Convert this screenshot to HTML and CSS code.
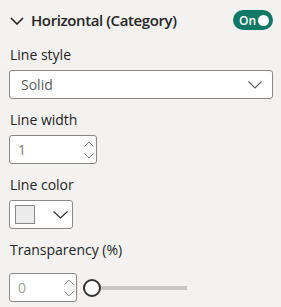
FILE: index.html
```html
<!DOCTYPE html>
<html>
<head>
    <title>Format pane</title>
    <link rel="stylesheet" href="styles.css">
</head>
<body>
    <div class="pane">
        <div class="card-head">
            <div class="head-title">
                <svg class="head-chevron" width="14" height="8" viewBox="0 0 14 8"><path d="M1 1 L7 7 L13 1" fill="none" stroke="#252423" stroke-width="1.6"/></svg>
                <span>Horizontal (Category)</span>
            </div>
            <div class="toggle"><span>On</span><i class="knob"></i></div>
        </div>

        <label class="field-label first">Line style</label>
        <div class="dropdown">
            <span>Solid</span>
            <svg width="14" height="8" viewBox="0 0 14 8"><path d="M0.5 0.5 L7 7 L13.5 0.5" fill="none" stroke="#605e5c" stroke-width="1.1"/></svg>
        </div>

        <label class="field-label">Line width</label>
        <div class="spin wide">
            <span class="value">1</span>
            <div class="arrows">
                <svg width="10" height="6" viewBox="0 0 10 6"><path d="M0.5 5.5 L5 1 L9.5 5.5" fill="none" stroke="#8a8886" stroke-width="1"/></svg>
                <svg width="10" height="6" viewBox="0 0 10 6"><path d="M0.5 0.5 L5 5 L9.5 0.5" fill="none" stroke="#8a8886" stroke-width="1"/></svg>
            </div>
        </div>

        <label class="field-label">Line color</label>
        <div class="color-pick">
            <span class="swatch"></span>
            <svg width="15" height="8" viewBox="0 0 15 8"><path d="M0.5 0.5 L7.5 7 L14.5 0.5" fill="none" stroke="#323130" stroke-width="1.2"/></svg>
        </div>

        <label class="field-label">Transparency (%)</label>
        <div class="slider-row">
            <div class="spin narrow">
                <span class="value light">0</span>
                <div class="arrows">
                    <svg width="10" height="6" viewBox="0 0 10 6"><path d="M0.5 5.5 L5 1 L9.5 5.5" fill="none" stroke="#8a8886" stroke-width="1"/></svg>
                    <svg width="10" height="6" viewBox="0 0 10 6"><path d="M0.5 0.5 L5 5 L9.5 0.5" fill="none" stroke="#8a8886" stroke-width="1"/></svg>
                </div>
            </div>
            <div class="slider">
                <div class="track"></div>
                <div class="thumb"></div>
            </div>
        </div>
    </div>
</body>
</html>
```

FILE: styles.css
```css
body { margin: 0; background: #f3f2f1; font-family: "Segoe UI", "Open Sans", sans-serif; color: #252423; }
.pane { padding: 10px 8px 0 9px; display: flex; flex-direction: column; align-items: flex-start; }

.card-head { display: flex; align-items: center; justify-content: space-between; width: 100%; height: 20px; }
.head-title { display: flex; align-items: center; gap: 7px; padding-left: 1px; font-size: 15px; font-weight: 600; letter-spacing: -0.4px; }
.head-chevron { margin-top: 1px; }
.toggle { width: 40px; height: 20px; border-radius: 10px; background: #117865; color: #fff; display: flex; align-items: center; justify-content: space-between; padding: 0 4px 0 6px; box-sizing: border-box; font-size: 12px; font-weight: 600; }
.knob { width: 11px; height: 11px; border-radius: 50%; background: #fff; display: block; }

.field-label { display: block; font-size: 14px; line-height: 20px; margin: 11px 0 5px 1px; color: #252423; }
.field-label.first { margin-top: 15px; }

.dropdown { width: 264px; height: 29px; box-sizing: border-box; border: 1px solid #8a8886; border-radius: 3px; background: #fff; display: flex; align-items: center; justify-content: space-between; padding: 0 10px 0 11px; font-size: 14px; color: #605e5c; }

.spin { height: 29px; box-sizing: border-box; border: 1px solid #8a8886; border-radius: 3px; background: #fff; display: flex; align-items: center; justify-content: space-between; padding: 0 2px 0 8px; font-size: 14px; color: #797775; }
.spin .light { color: #a19f9d; }
.spin.wide { width: 88px; }
.spin.narrow { width: 68px; }
.arrows { display: flex; flex-direction: column; gap: 6px; }
.arrows svg { display: block; }

.color-pick { width: 64px; height: 29px; box-sizing: border-box; border: 1px solid #8a8886; border-radius: 3px; background: #fff; display: flex; align-items: center; justify-content: space-between; padding: 0 4px 0 5px; }
.swatch { width: 20px; height: 19px; box-sizing: border-box; border: 1px solid #8a8886; background: #ebebeb; display: block; }

.slider-row { display: flex; align-items: center; gap: 6px; margin-top: 8px; }
.slider { position: relative; width: 104px; height: 18px; display: flex; align-items: center; }
.track { width: 100%; height: 4px; background: #c8c6c4; }
.thumb { position: absolute; left: 0; top: 0; width: 18px; height: 18px; box-sizing: border-box; border: 2px solid #323130; border-radius: 50%; background: #fff; }
```
